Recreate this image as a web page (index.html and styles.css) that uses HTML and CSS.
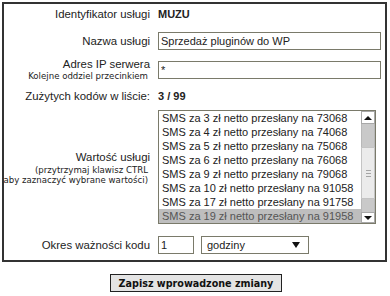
FILE: index.html
```html
<!DOCTYPE html>
<html>
<head>
	<meta charset="UTF-8">
	<title>Edycja usługi</title>
	<link rel="stylesheet" href="styles.css">
</head>
<body>
	<div class="panel">
		<div class="row r-id">
			<span class="lbl">Identyfikator usługi</span>
			<b class="val">MUZU</b>
		</div>
		<div class="row r-name">
			<label class="lbl" for="nazwa">Nazwa usługi</label>
			<input class="txt wide" id="nazwa" value="Sprzedaż pluginów do WP">
		</div>
		<div class="row r-ip">
			<label class="lbl" for="ip">Adres IP serwera<small>Kolejne oddziel przecinkiem</small></label>
			<input class="txt wide" id="ip" value="*">
		</div>
		<div class="row r-used">
			<span class="lbl">Zużytych kodów w liście:</span>
			<b class="val">3 / 99</b>
		</div>
		<div class="row r-val">
			<label class="lbl">Wartość usługi<small>(przytrzymaj klawisz CTRL<br>aby zaznaczyć wybrane wartości)</small></label>
			<div class="listbox">
				<ul class="opts">
					<li>SMS za 3 zł netto przesłany na 73068</li>
					<li>SMS za 4 zł netto przesłany na 74068</li>
					<li>SMS za 5 zł netto przesłany na 75068</li>
					<li>SMS za 6 zł netto przesłany na 76068</li>
					<li>SMS za 9 zł netto przesłany na 79068</li>
					<li>SMS za 10 zł netto przesłany na 91058</li>
					<li>SMS za 17 zł netto przesłany na 91758</li>
					<li class="sel">SMS za 19 zł netto przesłany na 91958</li>
				</ul>
				<div class="sbar">
					<div class="sbtn up"><i></i></div>
					<div class="trk t1"></div>
					<div class="thumb"><i></i><i></i><i></i></div>
					<div class="trk t2"></div>
					<div class="sbtn down"><i></i></div>
				</div>
			</div>
		</div>
		<div class="row r-exp">
			<label class="lbl" for="okres">Okres ważności kodu</label>
			<div class="exp">
				<input class="txt num" id="okres" value="1">
				<div class="dd">godziny<span class="arr"></span></div>
			</div>
		</div>
	</div>
	<div class="actions">
		<button class="save">Zapisz wprowadzone zmiany</button>
	</div>
</body>
</html>
```

FILE: styles.css
```css
body { margin: 2px; background: #FFF; color: #222; font-family: "Liberation Sans", Arial, sans-serif; font-size: 11px; }
.panel { width: 385px; box-sizing: border-box; border: 2px solid #333; padding: 2px 5px 6px 0; }
.row { display: grid; grid-template-columns: 146px 1fr; column-gap: 8px; align-items: center; }
.lbl { text-align: right; line-height: 14px; font-size: 11.4px; }
.lbl small { display: block; padding-right: 2px; white-space: nowrap; font-family: "DejaVu Sans", sans-serif; font-size: 8.6px; line-height: 11px; }
.val { line-height: 16px; }
.r-id { height: 16px; }
.r-name { margin-top: 10px; }
.r-ip { margin-top: 7px; }
.r-used { margin-top: 6px; }
.r-val { margin-top: 6px; }
.r-val .lbl small { line-height: 10px; margin: 1px 0 0 -6px; }
.r-exp { margin-top: 12px; }

.txt { box-sizing: border-box; height: 18px; margin: 0; padding: 0 2px; border: 1px solid #7A7A6A;
	font: 11px "Liberation Sans", Arial, sans-serif; color: #222; background: #FFF; }
.wide { width: 223px; }

.listbox { display: flex; width: 218px; height: 114px; box-sizing: border-box; border: 1px solid #7A7A6A; }
.opts { flex: 1; margin: 0; padding: 0; list-style: none; }
.opts li { height: 14px; line-height: 14px; padding-left: 3px; white-space: nowrap; }
.opts li.sel { background: #BEBEBE; color: #555; }
.sbar { width: 14px; display: flex; flex-direction: column; }
.sbtn { box-sizing: border-box; background: #FFF; border: 1px solid #A8A8A8; display: flex; align-items: center; justify-content: center; }
.sbtn.up { height: 13px; }
.sbtn.down { height: 11px; }
.sbtn i { width: 0; height: 0; border-left: 4px solid transparent; border-right: 4px solid transparent; }
.sbtn.up i { border-bottom: 4px solid #111; }
.sbtn.down i { border-top: 4px solid #111; }
.trk { background: #C9C9C9; box-sizing: border-box; border-left: 1px solid #B8B8B8; border-right: 1px solid #B8B8B8; }
.t1 { height: 23px; }
.t2 { height: 13px; }
.thumb { height: 52px; box-sizing: border-box; background: #EBEBEB; border: 1px solid #C4C4C4;
	display: flex; flex-direction: column; align-items: center; justify-content: center; gap: 2px; }
.thumb i { width: 5px; height: 1px; background: #A5A5A5; }

.exp { display: flex; align-items: center; gap: 7px; }
.num { width: 36px; }
.dd { position: relative; box-sizing: border-box; width: 108px; height: 18px; line-height: 16px; padding-left: 5px;
	border: 1px solid #7A7A6A; }
.dd .arr { position: absolute; right: 8px; top: 5px; width: 0; height: 0;
	border-left: 4px solid transparent; border-right: 4px solid transparent; border-top: 6px solid #111; }

.actions { margin-top: 12px; text-align: center; padding-left: 2px; }
.save { height: 18px; padding: 0 8px; margin: 0; border: 1px solid #222; background: #E4E4E4; color: #111;
	font: bold 9.6px "DejaVu Sans", sans-serif; }
```
